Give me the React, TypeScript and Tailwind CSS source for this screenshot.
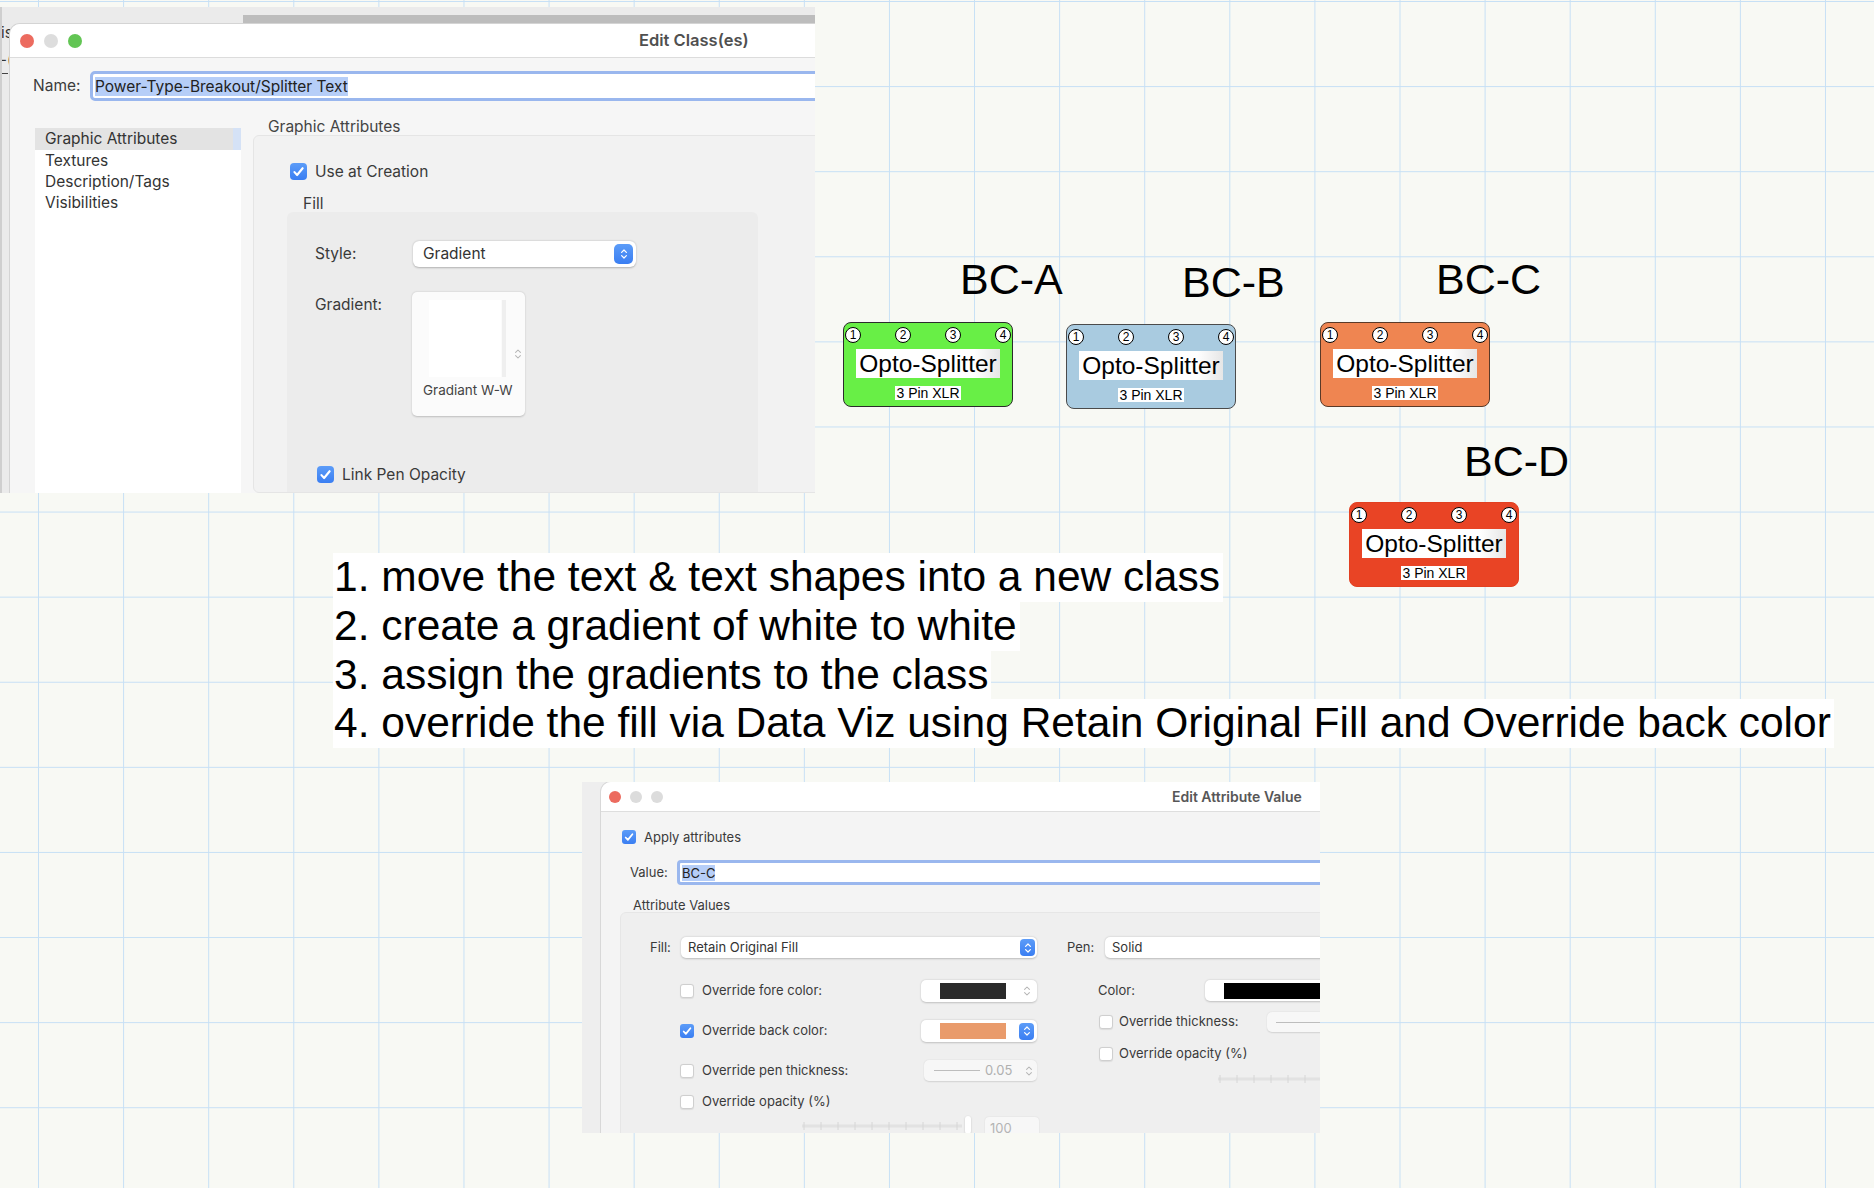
import React from "react";

// shared font stacks
const sys = "[font-family:Inter,Helvetica_Neue,Liberation_Sans,sans-serif]";
const arial = "[font-family:Liberation_Sans,Arial,sans-serif]";

function Lights({ small }: { small?: boolean }) {
  if (small) {
    return (
      <div className="flex items-center gap-[9px]">
        <span className="h-[12px] w-[12px] rounded-full bg-[#ec6b5f]" />
        <span className="h-[12px] w-[12px] rounded-full bg-[#dcdcdc]" />
        <span className="h-[12px] w-[12px] rounded-full bg-[#dcdcdc]" />
      </div>
    );
  }
  return (
    <div className="flex items-center gap-[10px]">
      <span className="h-[14px] w-[14px] rounded-full bg-[#ec6b5f]" />
      <span className="h-[14px] w-[14px] rounded-full bg-[#dddddd]" />
      <span className="h-[14px] w-[14px] rounded-full bg-[#62c554]" />
    </div>
  );
}

function Tick() {
  return (
    <svg viewBox="0 0 16 16" className="h-full w-full">
      <path
        d="M4.2 8.6l2.5 2.7L11.9 4.9"
        fill="none"
        stroke="white"
        strokeWidth="2"
        strokeLinecap="round"
        strokeLinejoin="round"
      />
    </svg>
  );
}

function Check({ on, small }: { on?: boolean; small?: boolean }) {
  if (small) {
    return on ? (
      <span className="h-[14px] w-[14px] shrink-0 rounded-[3px] bg-[linear-gradient(#5c9cf8,#3a7ef2)]">
        <Tick />
      </span>
    ) : (
      <span className="h-[14px] w-[14px] shrink-0 rounded-[3px] border border-[#cfcfcf] bg-white shadow-[0_0.5px_1px_rgba(0,0,0,0.08)]" />
    );
  }
  return on ? (
    <span className="h-[17px] w-[17px] shrink-0 rounded-[4px] bg-[linear-gradient(#5c9cf8,#3a7ef2)]">
      <Tick />
    </span>
  ) : (
    <span className="h-[17px] w-[17px] shrink-0 rounded-[4px] border border-[#cfcfcf] bg-white" />
  );
}

function BlueStepper({ small }: { small?: boolean }) {
  return (
    <span
      className={
        small
          ? "flex h-[17px] w-[15px] shrink-0 items-center justify-center rounded-[4px] bg-[linear-gradient(#5c9cf8,#3a7ef2)]"
          : "flex h-[20px] w-[19px] shrink-0 items-center justify-center rounded-[5px] bg-[linear-gradient(#5c9cf8,#3a7ef2)]"
      }
    >
      <svg viewBox="0 0 10 14" className="h-[12px] w-[8px]">
        <path
          d="M2 5L5 2l3 3M2 9l3 3 3-3"
          fill="none"
          stroke="white"
          strokeWidth="1.5"
          strokeLinecap="round"
          strokeLinejoin="round"
        />
      </svg>
    </span>
  );
}

function GrayStepper() {
  return (
    <svg viewBox="0 0 10 14" className="h-[12px] w-[8px] shrink-0">
      <path
        d="M2 5L5 2l3 3M2 9l3 3 3-3"
        fill="none"
        stroke="#b4b4b4"
        strokeWidth="1.3"
        strokeLinecap="round"
        strokeLinejoin="round"
      />
    </svg>
  );
}

function Ticks({ width }: { width: number }) {
  const marks = [];
  for (let x = 2; x < width; x += 17) marks.push(x);
  return (
    <svg width={width} height="8" className="shrink-0">
      <line x1="0" y1="4" x2={width} y2="4" stroke="#e2e2e2" strokeWidth="3" />
      {marks.map((x) => (
        <line key={x} x1={x} y1="0" x2={x} y2="8" stroke="#d6d6d6" strokeWidth="1" />
      ))}
    </svg>
  );
}

function EditClassWindow() {
  return (
    <div
      className={`absolute left-0 top-[7px] h-[486px] w-[815px] overflow-hidden border-l-2 border-[#cfcfcf] bg-[#ebebeb] ${sys}`}
    >
      <div className="absolute left-[241px] top-[8px] h-[9px] w-[574px] bg-[#bdbdbd]" />
      <span className="absolute -left-[1px] top-[17px] text-[15px] leading-[18px] text-[#333]">is</span>
      <span className="absolute -left-[2px] top-[44px] text-[15px] leading-[18px] text-[#333]">-(</span>
      <div className="absolute left-0 top-[66px] h-px w-[6px] bg-[#444]" />

      <div className="relative ml-[8px] mt-[17px] flex h-[469px] w-[805px] flex-col overflow-hidden rounded-tl-[10px] bg-[#f6f6f6] text-[15.5px] shadow-[0_0_0_1px_#d4d4d4]">
        <div className="flex h-[34px] shrink-0 items-center border-b border-[#dcdcdc] bg-white pl-[10px]">
          <Lights />
          <span className="ml-[557px] text-[16.5px] font-semibold text-[#505050]">Edit Class(es)</span>
        </div>

        <div className="mt-[13px] flex h-[30px] shrink-0 items-center pl-[23px]">
          <span className="w-[57px] text-[#3c3c3c]">Name:</span>
          <div className="-mr-[20px] flex h-[30px] flex-1 items-center rounded-[5px] border-[3px] border-[#9ab7ee] bg-white pl-[2px]">
            <span className="bg-[#b6cef8] leading-[19px] text-[#222]">Power-Type-Breakout/Splitter Text</span>
          </div>
        </div>

        <div className="mt-[27px] flex flex-1 pl-[25px]">
          <div className="flex w-[206px] shrink-0 flex-col bg-white text-[#333]">
            <div className="flex h-[22px]">
              <div className="flex flex-1 items-center bg-[#e3e3e3] pl-[10px]">Graphic Attributes</div>
              <div className="w-[8px] bg-[#d5e2f6]" />
            </div>
            <div className="flex h-[21px] items-center pl-[10px]">Textures</div>
            <div className="flex h-[21px] items-center pl-[10px]">Description/Tags</div>
            <div className="flex h-[21px] items-center pl-[10px]">Visibilities</div>
          </div>

          <div className="ml-[12px] flex flex-1 flex-col">
            <div className="-mt-[9px] h-[16px] pl-[15px] leading-[16px] text-[#444]">Graphic Attributes</div>
            <div className="-mr-[20px] flex flex-1 flex-col rounded-[6px] border border-[#e5e5e5] bg-[#f2f2f2]">
              <div className="mt-[27px] flex items-center gap-[8px] pl-[36px]">
                <Check on />
                <span className="leading-[17px] text-[#3a3a3a]">Use at Creation</span>
              </div>
              <div className="mt-[16px] pl-[49px] leading-[16px] text-[#3a3a3a]">Fill</div>
              <div className="ml-[33px] flex w-[471px] flex-1 flex-col rounded-t-[6px] bg-[#ececec]">
                <div className="mt-[29px] flex h-[26px] items-center pl-[28px]">
                  <span className="w-[98px] text-[#3a3a3a]">Style:</span>
                  <div className="flex h-[26px] w-[223px] items-center justify-between rounded-[6px] bg-white pl-[10px] pr-[3px] shadow-[0_0.5px_2px_rgba(0,0,0,0.25)]">
                    <span className="text-[#333]">Gradient</span>
                    <BlueStepper />
                  </div>
                </div>
                <div className="mt-[25px] flex pl-[28px]">
                  <span className="w-[97px] pt-[5px] leading-[16px] text-[#3a3a3a]">Gradient:</span>
                  <div className="flex h-[124px] w-[113px] flex-col rounded-[5px] bg-[#fbfbfb] shadow-[0_0.5px_2px_rgba(0,0,0,0.2)]">
                    <div className="flex items-center pl-[17px] pt-[8px]">
                      <div className="h-[77px] w-[72px] bg-white" />
                      <div className="ml-[1px] h-[77px] w-[4px] bg-[#efefef]" />
                      <div className="ml-[8px] mt-[30px]">
                        <GrayStepper />
                      </div>
                    </div>
                    <span className="mt-[3px] pl-[11px] text-[13.5px] text-[#444]">Gradiant W-W</span>
                  </div>
                </div>
                <div className="mt-[50px] flex items-center gap-[8px] pl-[30px]">
                  <Check on />
                  <span className="leading-[17px] text-[#3a3a3a]">Link Pen Opacity</span>
                </div>
              </div>
            </div>
          </div>
        </div>
      </div>
    </div>
  );
}

function ColorWell({ swatch, blue }: { swatch: string; blue?: boolean }) {
  return (
    <div className="flex h-[22px] w-[116px] shrink-0 items-center rounded-[5px] bg-white pl-[19px] pr-[3px] shadow-[0_0.5px_2px_rgba(0,0,0,0.2)]">
      <div className={`h-[16px] w-[66px] ${swatch}`} />
      <div className="ml-auto flex w-[15px] justify-center">{blue ? <BlueStepper small /> : <GrayStepper />}</div>
    </div>
  );
}

function EditAttrWindow() {
  return (
    <div className={`absolute left-[582px] top-[782px] h-[351px] w-[738px] overflow-hidden bg-[#eeeeee] ${sys}`}>
      <div className="ml-[19px] flex h-[351px] w-[719px] flex-col overflow-hidden rounded-tl-[10px] bg-[#f4f4f4] text-[13px] text-[#3a3a3a] shadow-[0_0_0_1px_#d8d8d8]">
        <div className="flex h-[30px] shrink-0 items-center border-b border-[#dedede] bg-white pl-[8px]">
          <Lights small />
          <span className="ml-[509px] text-[14px] font-semibold text-[#575757]">Edit Attribute Value</span>
        </div>

        <div className="mt-[18px] flex items-center gap-[8px] pl-[21px]">
          <Check on small />
          <span className="leading-[14px]">Apply attributes</span>
        </div>

        <div className="mt-[16px] flex h-[25px] shrink-0 items-center pl-[29px]">
          <span className="w-[47px]">Value:</span>
          <div className="-mr-[20px] flex h-[25px] flex-1 items-center rounded-[4px] border-[3px] border-[#9ab7ee] bg-white pl-[2px]">
            <span className="bg-[#b6cef8] leading-[16px] text-[#222]">BC-C</span>
          </div>
        </div>

        <div className="mt-[13px] pl-[32px] leading-[14px]">Attribute Values</div>

        <div className="-mr-[20px] ml-[19px] flex flex-1 rounded-t-[6px] border border-[#e6e6e6] bg-[#efefef]">
          <div className="flex w-[446px] shrink-0 flex-col">
            <div className="mt-[24px] flex h-[21px] items-center pl-[29px]">
              <span className="w-[31px]">Fill:</span>
              <div className="flex h-[21px] w-[356px] items-center justify-between rounded-[5px] bg-white pl-[7px] pr-[2px] shadow-[0_0.5px_2px_rgba(0,0,0,0.22)]">
                <span className="text-[#333]">Retain Original Fill</span>
                <BlueStepper small />
              </div>
            </div>

            <div className="mt-[22px] flex h-[22px] items-center pl-[59px]">
              <Check small />
              <span className="ml-[8px] w-[219px]">Override fore color:</span>
              <ColorWell swatch="bg-[#2a2a2a]" />
            </div>

            <div className="mt-[18px] flex h-[22px] items-center pl-[59px]">
              <Check on small />
              <span className="ml-[8px] w-[219px]">Override back color:</span>
              <ColorWell swatch="bg-[#e99b6b]" blue />
            </div>

            <div className="mt-[18px] flex h-[21px] items-center pl-[59px]">
              <Check small />
              <span className="ml-[8px] w-[222px]">Override pen thickness:</span>
              <div className="flex h-[21px] w-[113px] items-center rounded-[5px] bg-[#f7f7f7] pl-[10px] pr-[4px] shadow-[0_0.5px_1.5px_rgba(0,0,0,0.12)]">
                <div className="h-px w-[46px] bg-[#bdbdbd]" />
                <span className="ml-[5px] text-[#b0b0b0]">0.05</span>
                <div className="ml-auto">
                  <GrayStepper />
                </div>
              </div>
            </div>

            <div className="mt-[10px] flex h-[22px] items-center pl-[59px]">
              <Check small />
              <span className="ml-[8px]">Override opacity (%)</span>
            </div>

            <div className="mt-[4px] flex items-start pl-[181px]">
              <div className="mt-[5px]">
                <Ticks width={160} />
              </div>
              <div className="ml-[3px] mt-[-1px] h-[18px] w-[6px] rounded-[3px] bg-white shadow-[0_0.5px_2px_rgba(0,0,0,0.2)]" />
              <div className="ml-[14px] flex h-[24px] w-[54px] items-center rounded-[4px] bg-[#f7f7f7] pl-[5px] text-[#b4b4b4] shadow-[0_0.5px_1.5px_rgba(0,0,0,0.12)]">
                100
              </div>
            </div>
          </div>

          <div className="flex flex-1 flex-col">
            <div className="mt-[24px] flex h-[21px] items-center">
              <span className="w-[38px]">Pen:</span>
              <div className="flex h-[21px] flex-1 items-center rounded-[5px] bg-white pl-[7px] shadow-[0_0.5px_2px_rgba(0,0,0,0.22)]">
                <span className="text-[#333]">Solid</span>
              </div>
            </div>

            <div className="mt-[22px] flex h-[21px] items-center pl-[31px]">
              <span className="w-[107px]">Color:</span>
              <div className="flex h-[21px] flex-1 items-center rounded-[5px] bg-white pl-[19px] shadow-[0_0.5px_2px_rgba(0,0,0,0.2)]">
                <div className="h-[16px] w-[200px] bg-black" />
              </div>
            </div>

            <div className="mt-[11px] flex h-[20px] items-center pl-[32px]">
              <Check small />
              <span className="ml-[6px] w-[148px]">Override thickness:</span>
              <div className="flex h-[20px] flex-1 items-center rounded-[5px] bg-[#f7f7f7] pl-[9px] shadow-[0_0.5px_1.5px_rgba(0,0,0,0.12)]">
                <div className="h-px w-[60px] bg-[#bdbdbd]" />
              </div>
            </div>

            <div className="mt-[12px] flex h-[20px] items-center pl-[32px]">
              <Check small />
              <span className="ml-[6px]">Override opacity (%)</span>
            </div>

            <div className="mt-[11px] pl-[151px]">
              <Ticks width={140} />
            </div>
          </div>
        </div>
      </div>
    </div>
  );
}

type SplitterProps = { className: string };

function Splitter({ className }: SplitterProps) {
  return (
    <div className={`absolute flex h-[85px] w-[170px] flex-col items-center rounded-[8px] border ${arial} ${className}`}>
      <div className="flex w-full justify-between px-[1px] pt-[4px]">
        {[1, 2, 3, 4].map((n) => (
          <div
            key={n}
            className="flex h-[16px] w-[16px] items-center justify-center rounded-full border border-black bg-white text-[12px] leading-none text-black"
          >
            {n}
          </div>
        ))}
      </div>
      <div className="mt-[6px] h-[29px] bg-[linear-gradient(to_right,#ffffff_82%,#e6e6e6)] px-[3px] text-[24.5px] leading-[29px] text-black">
        Opto-Splitter
      </div>
      <div className="mt-[8px] h-[14px] bg-white px-[1px] text-[14px] leading-[14px] text-black">3 Pin XLR</div>
    </div>
  );
}

function BigLabel({ className, children }: { className: string; children: React.ReactNode }) {
  return <div className={`absolute text-[43px] leading-none text-black ${arial} ${className}`}>{children}</div>;
}

const steps = [
  "1. move the text & text shapes into a new class",
  "2. create a gradient of white to white",
  "3. assign the gradients to the class",
  "4. override the fill via Data Viz using Retain Original Fill and Override back color",
];

export default function App() {
  return (
    <div className="relative h-[1188px] w-full overflow-hidden bg-[#f8f9f4] [background-image:linear-gradient(to_right,#c7e0f5_1px,transparent_1px),linear-gradient(to_bottom,#c7e0f5_1px,transparent_1px)] [background-size:85.1px_85.1px] [background-position:38px_1px]">
      <EditClassWindow />

      <BigLabel className="left-[960px] top-[258px]">BC-A</BigLabel>
      <BigLabel className="left-[1182px] top-[261px]">BC-B</BigLabel>
      <BigLabel className="left-[1436px] top-[258px]">BC-C</BigLabel>
      <BigLabel className="left-[1464px] top-[440px]">BC-D</BigLabel>

      <Splitter className="left-[843px] top-[322px] border-[#2b2b2b] bg-[#68ef46]" />
      <Splitter className="left-[1066px] top-[324px] border-[#4b4b4b] bg-[#a9cbe0]" />
      <Splitter className="left-[1320px] top-[322px] border-[#5a3a28] bg-[#ef8551]" />
      <Splitter className="left-[1349px] top-[502px] border-[#e24021] bg-[#e94425]" />

      <div className={`absolute left-[333px] top-[553px] flex flex-col items-start ${arial}`}>
        {steps.map((s) => (
          <div
            key={s}
            className="whitespace-nowrap bg-white pl-[1px] pr-[3px] text-[42.5px] leading-[48.75px] text-black"
          >
            {s}
          </div>
        ))}
      </div>

      <EditAttrWindow />
    </div>
  );
}
